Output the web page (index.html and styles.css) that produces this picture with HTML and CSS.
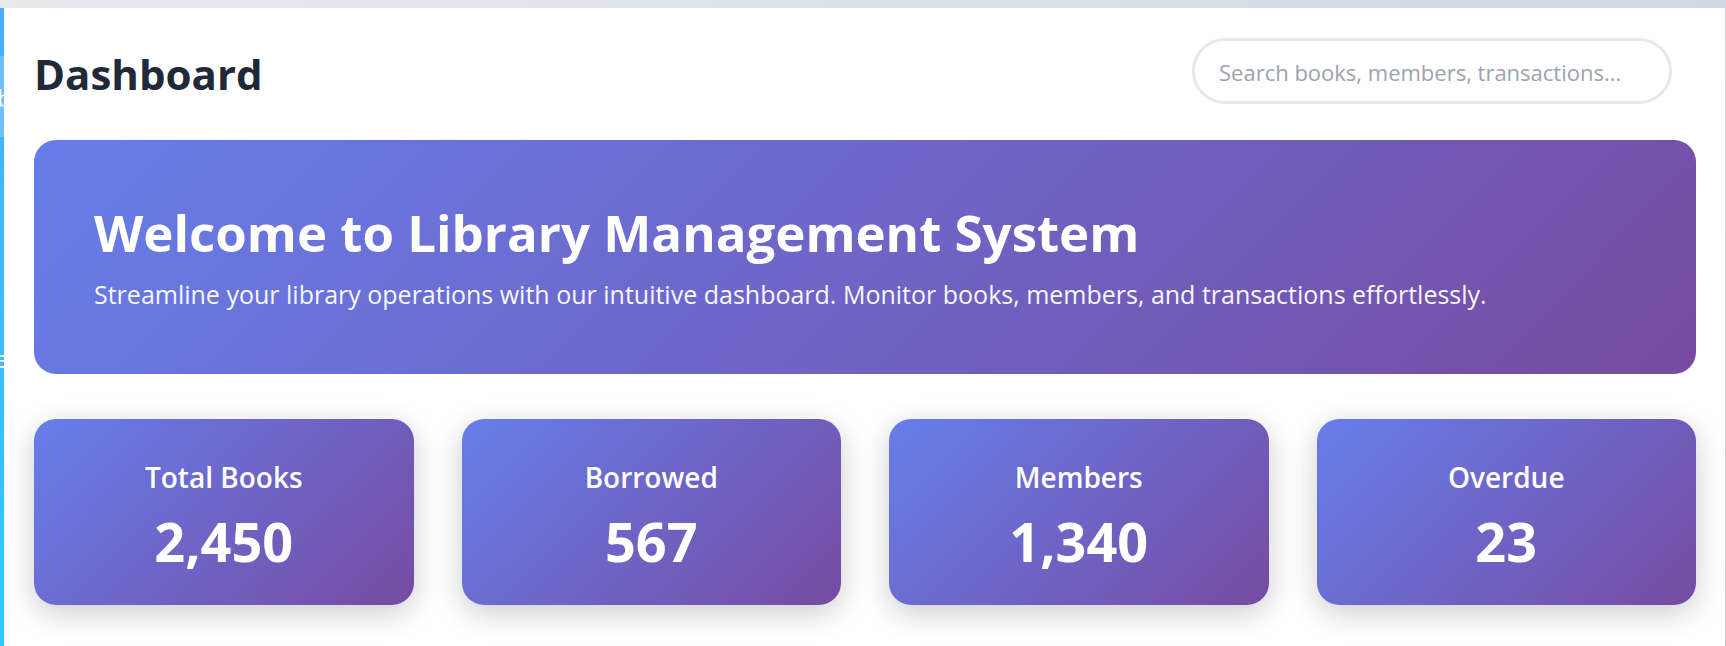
FILE: index.html
```
<!DOCTYPE html>
<html lang="en">
<head>
<meta charset="utf-8">
<title>Library Management System</title>
<link rel="stylesheet" href="styles.css">
</head>
<body>
<div class="app">
  <nav class="sidebar" aria-label="Sections">
    <a class="nav-item active" href="#">b</a>
    <a class="nav-item lower" href="#">e</a>
  </nav>
  <main class="content">
    <header class="header">
      <h1 class="page-title">Dashboard</h1>
      <input class="search" type="search" aria-label="Search" placeholder="Search books, members, transactions...">
    </header>
    <section class="hero">
      <h2 class="hero-title">Welcome to Library Management System</h2>
      <p class="hero-text">Streamline your library operations with our intuitive dashboard. Monitor books, members, and transactions effortlessly.</p>
    </section>
    <section class="stats">
      <article class="card"><h3 class="card-label">Total Books</h3><p class="card-value">2,450</p></article>
      <article class="card"><h3 class="card-label">Borrowed</h3><p class="card-value">567</p></article>
      <article class="card"><h3 class="card-label">Members</h3><p class="card-value">1,340</p></article>
      <article class="card"><h3 class="card-label">Overdue</h3><p class="card-value">23</p></article>
    </section>
  </main>
</div>
</body>
</html>
```
FILE: styles.css
```
* { box-sizing: border-box; margin: 0; }

body {
  min-height: 100vh;
  padding: 8px 1px 0 0;
  display: flex;
  font-family: "Segoe UI", "Open Sans", "Noto Sans", sans-serif;
  background: linear-gradient(135deg, #e8eaee, #c8d2df);
}

.app { flex: 1; display: flex; background: #fff; }

.sidebar {
  flex: 0 0 4px;
  overflow: hidden;
  padding-top: 48px;
  background: linear-gradient(180deg, #4facfe, #2bcbfe);
}

.nav-item {
  display: block;
  height: 81px;
  line-height: 84px;
  font-size: 24px;
  text-indent: -3px;
  color: #fff;
  text-decoration: none;
}
.nav-item.active { background: rgba(255, 255, 255, 0.2); }
.nav-item.lower { margin-top: 180px; text-indent: -5px; }

.content { flex: 1; min-width: 0; padding: 30px 29px 40px 30px; }

.header {
  display: flex;
  align-items: center;
  justify-content: space-between;
  padding-right: 24px;
  margin-bottom: 36px;
}

.page-title { padding-top: 6px; font-size: 42px; line-height: 60px; font-weight: 700; color: #1f2937; }

.search {
  width: 480px;
  height: 66px;
  padding: 2px 16px 0 24px;
  border: 3px solid #e2e8f0;
  border-radius: 33px;
  outline: none;
  background: #fff;
  font-family: inherit;
  font-size: 22px;
  color: #1f2937;
  appearance: none;
}
.search::placeholder { color: #9ca3af; opacity: 1; }

.hero {
  padding: 60px;
  margin-bottom: 45px;
  border-radius: 22px;
  color: #fff;
  background: linear-gradient(135deg, #667eea, #764ba2);
}
.hero-title { font-size: 51px; line-height: 64px; font-weight: 700; }
.hero-text { margin-top: 10px; font-size: 25px; line-height: 40px; opacity: 0.95; }

.stats { display: grid; grid-template-columns: repeat(4, 1fr); gap: 48px; }

.card {
  padding: 38px 30px 30px;
  border-radius: 22px;
  text-align: center;
  color: #fff;
  background: linear-gradient(135deg, #667eea, #764ba2);
  box-shadow: 0 8px 30px rgba(0, 0, 0, 0.2);
}
.card-label { font-size: 28px; line-height: 40px; font-weight: 600; }
.card-value { margin-top: 10px; font-size: 54px; line-height: 68px; font-weight: 700; }
```
